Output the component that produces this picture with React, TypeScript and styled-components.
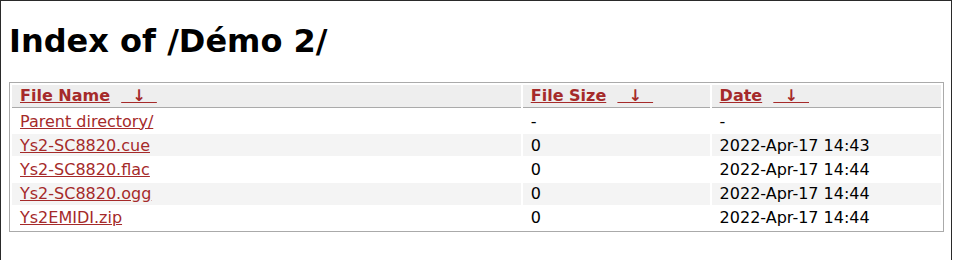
import React from "react";
import styled, { createGlobalStyle } from "styled-components";

const Global = createGlobalStyle`
  html, body { margin: 0; padding: 0; background: #fff; }
  body { font-family: "DejaVu Sans", sans-serif; font-size: 16px; color: #000; }
`;

const Frame = styled.div`
  box-sizing: border-box;
  width: 952px;
  min-height: 260px;
  border-top: 1px solid #2a2a2a;
  border-left: 1px solid #2a2a2a;
  border-right: 1px solid #2a2a2a;
  padding: 0 7px 8px 8px;
  display: flow-root;
`;

const Title = styled.h1`
  font-size: 32px;
  font-weight: bold;
  margin: 21.44px 0;
`;

const Table = styled.table`
  width: 100%;
  border: 1px solid #aaa;
  border-collapse: separate;
  border-spacing: 2px;
`;

const HeadCell = styled.th<{ $w: string }>`
  width: ${(p) => p.$w};
  text-align: left;
  background: #eee;
  padding: 1.6px 8px;
  border-bottom: 1px solid #aaa;
  font-weight: bold;
  white-space: pre;
`;

const Row = styled.tr<{ $striped: boolean }>`
  background: ${(p) => (p.$striped ? "#f4f4f4" : "transparent")};
`;

const Cell = styled.td`
  padding: 1.6px 8px;
  text-align: left;
`;

const Link = styled.a`
  color: #a52a2a;
  text-decoration: underline;
`;

const cols = [
  { label: "File Name", w: "55%" },
  { label: "File Size", w: "20.2%" },
  { label: "Date", w: "24.8%" },
];

const rows = [
  { name: "Parent directory/", size: "-", date: "-" },
  { name: "Ys2-SC8820.cue", size: "0", date: "2022-Apr-17 14:43" },
  { name: "Ys2-SC8820.flac", size: "0", date: "2022-Apr-17 14:44" },
  { name: "Ys2-SC8820.ogg", size: "0", date: "2022-Apr-17 14:44" },
  { name: "Ys2EMIDI.zip", size: "0", date: "2022-Apr-17 14:44" },
];

export default function App() {
  return (
    <Frame>
      <Global />
      <Title>Index of /Démo 2/</Title>
      <Table>
        <thead>
          <tr>
            {cols.map((c) => (
              <HeadCell key={c.label} $w={c.w}>
                <Link href="#">{c.label}</Link>
                {"\u00a0 "}
                <Link href="#">{"\u00a0\u00a0\u2193\u00a0\u00a0"}</Link>
              </HeadCell>
            ))}
          </tr>
        </thead>
        <tbody>
          {rows.map((r, i) => (
            <Row key={r.name} $striped={i % 2 === 1}>
              <Cell>
                <Link href="#">{r.name}</Link>
              </Cell>
              <Cell>{r.size}</Cell>
              <Cell>{r.date}</Cell>
            </Row>
          ))}
        </tbody>
      </Table>
    </Frame>
  );
}
